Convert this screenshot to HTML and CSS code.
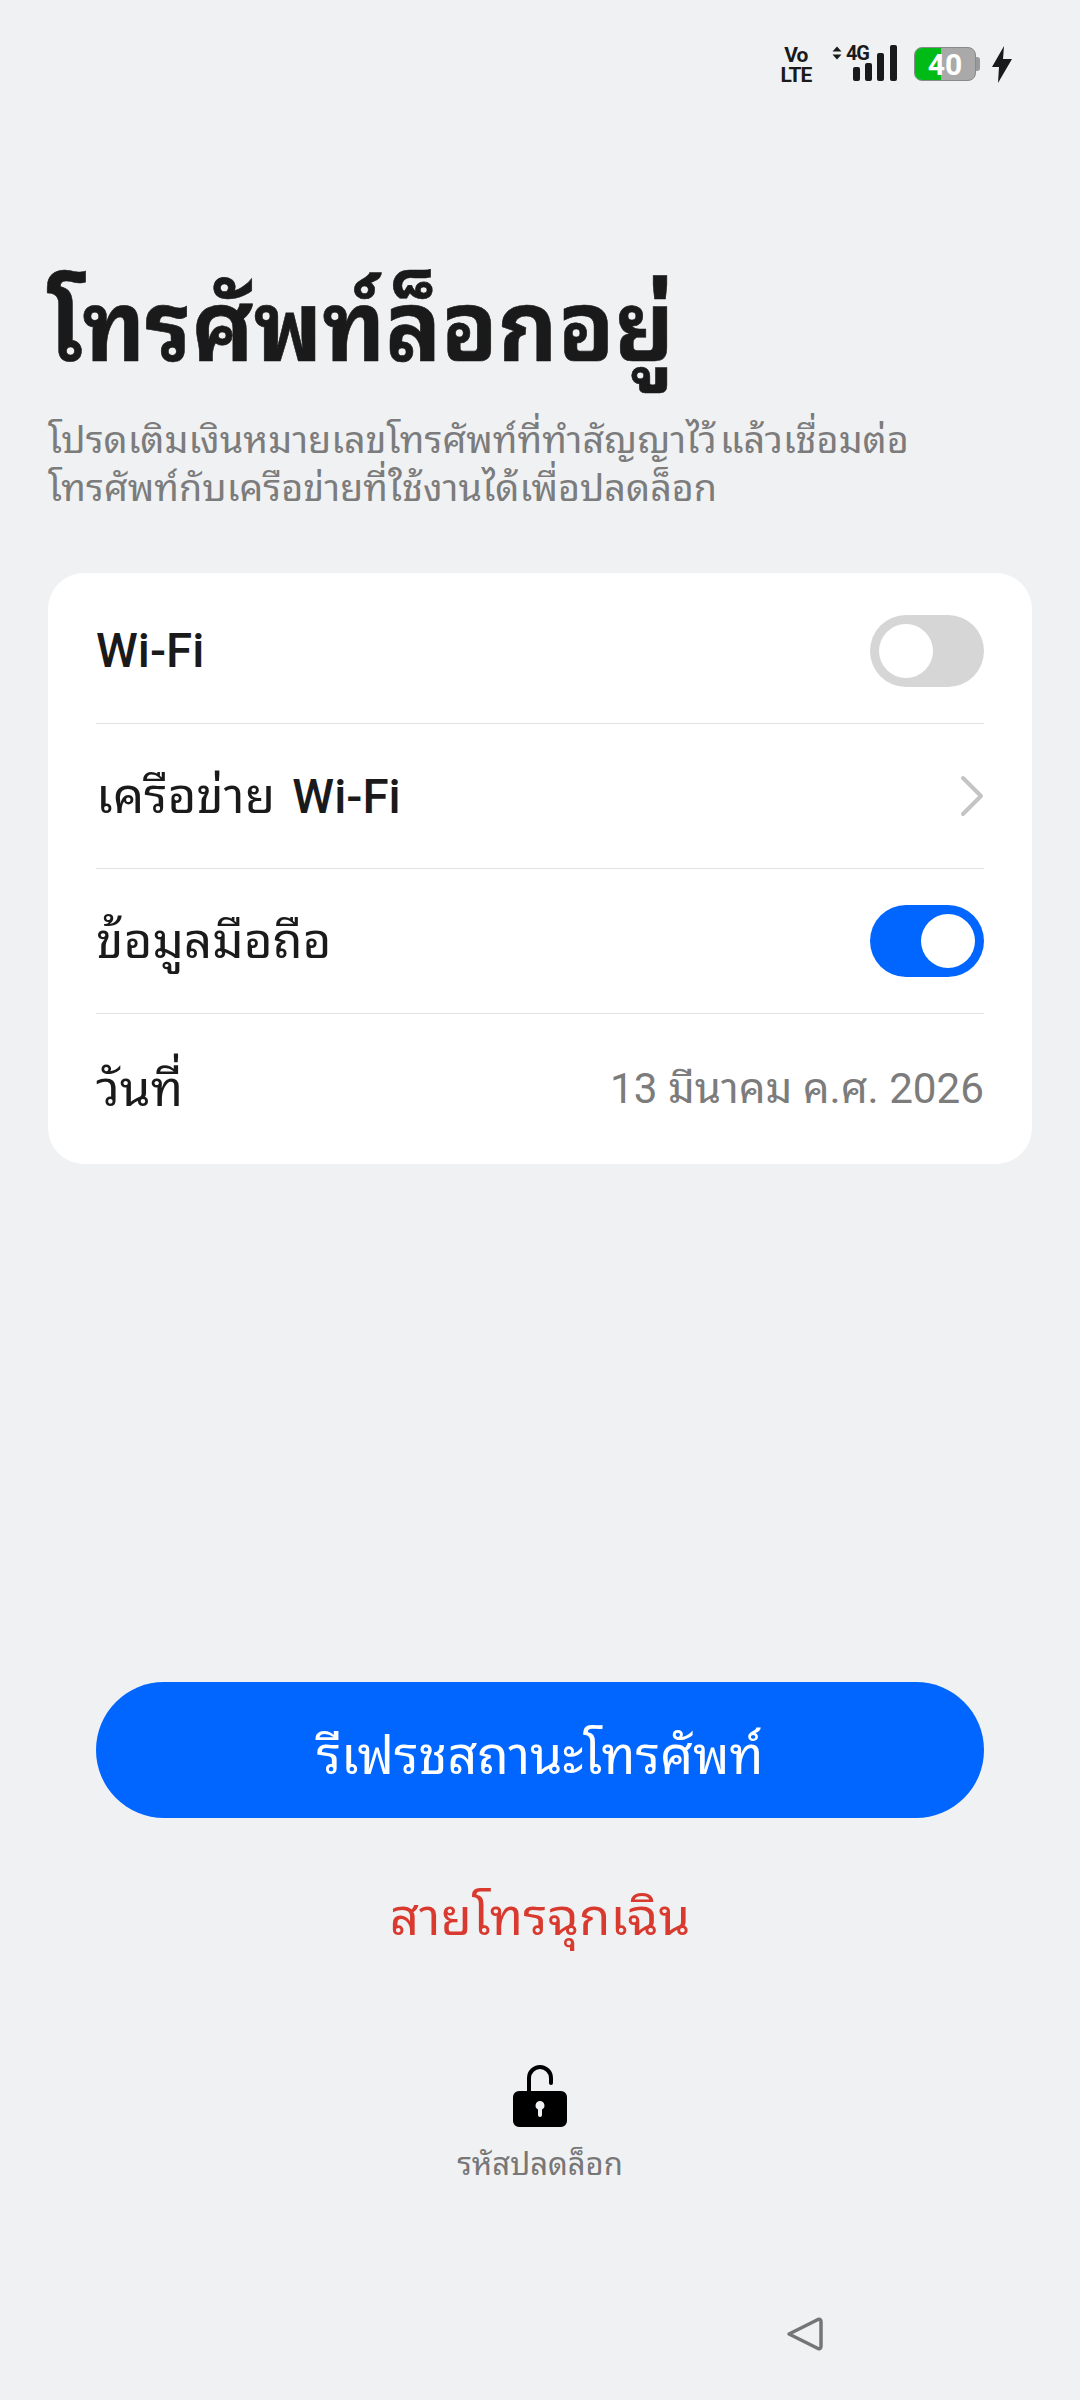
FILE: index.html
```html
<!DOCTYPE html>
<html lang="th">
<head>
<meta charset="utf-8">
<title>โทรศัพท์ล็อกอยู่</title>
<link rel="stylesheet" href="styles.css">
</head>
<body>
<div class="screen">
  <header class="status">
    <div class="volte"><span>Vo</span><span>LTE</span></div>
    <div class="net">
      <div class="net-type">
        <svg width="10" height="14" viewBox="0 0 10 14"><path d="M0.500 5.500L5 0.500L9.500 5.500ZM0.500 8.500L5 13.500L9.500 8.500Z" fill="#1a1a1a"/></svg>
        <span>4G</span>
      </div>
      <svg class="bars" width="44" height="36" viewBox="0 0 44 36">
        <rect x="0" y="22" width="7" height="14" rx="2" fill="#1a1a1a"/>
        <rect x="12" y="18" width="7" height="18" rx="2" fill="#1a1a1a"/>
        <rect x="24" y="8" width="7" height="28" rx="2" fill="#1a1a1a"/>
        <rect x="37" y="0" width="7" height="36" rx="2" fill="#1a1a1a"/>
      </svg>
    </div>
    <div class="battery"><div class="battery-body"><div class="battery-fill"></div><span class="battery-num">40</span></div><div class="battery-cap"></div></div>
    <svg class="bolt" width="20" height="37" viewBox="0 0 20 37"><path d="M12 0L0 21H7L6 37L20 13H11Z" fill="#1a1a1a"/></svg>
  </header>
  <main class="main">
    <h1 class="title">โทรศัพท์ล็อกอยู่</h1>
    <p class="desc">โปรดเติมเงินหมายเลขโทรศัพท์ที่ทำสัญญาไว้ แล้วเชื่อมต่อ<br>โทรศัพท์กับเครือข่ายที่ใช้งานได้เพื่อปลดล็อก</p>
    <section class="card">
      <div class="row row-first"><span class="latin">Wi-Fi</span><span class="toggle"><span class="knob"></span></span></div>
      <div class="row"><span class="label">เครือข่าย <span class="latin">Wi-Fi</span></span>
        <svg width="24" height="42" viewBox="0 0 24 42" class="chev"><path d="M3 3L21 21L3 39" fill="none" stroke="#c4c4c4" stroke-width="4" stroke-linecap="round" stroke-linejoin="round"/></svg>
      </div>
      <div class="row"><span class="label">ข้อมูลมือถือ</span><span class="toggle on"><span class="knob"></span></span></div>
      <div class="row"><span class="label">วันที่</span><span class="value">13 มีนาคม ค.ศ. 2026</span></div>
    </section>
  </main>
  <div class="actions">
    <button class="refresh">รีเฟรชสถานะโทรศัพท์</button>
    <div class="emergency">สายโทรฉุกเฉิน</div>
    <div class="unlock">
      <svg width="54" height="62" viewBox="0 0 54 62"><path d="M16 30V13A11 11 0 0 1 38 13V18" fill="none" stroke="#000" stroke-width="4" stroke-linecap="round"/><path fill-rule="evenodd" d="M6 26H48A6 6 0 0 1 54 32V56A6 6 0 0 1 48 62H6A6 6 0 0 1 0 56V32A6 6 0 0 1 6 26ZM27 36A4.500 4.500 0 0 0 25 44.500V50A2 2 0 0 0 29 50V44.500A4.500 4.500 0 0 0 27 36Z" fill="#000"/></svg>
      <span>รหัสปลดล็อก</span>
    </div>
  </div>
  <nav class="nav">
    <svg width="38" height="36" viewBox="0 0 38 36"><path d="M3 18L32 3.500Q35 2.500 35 6V30Q35 33.500 32 32.500L3 18Z" fill="none" stroke="#757575" stroke-width="3.500" stroke-linejoin="round"/></svg>
  </nav>
</div>
</body>
</html>
```
FILE: styles.css
```css
* { box-sizing: border-box; }
html, body { margin: 0; padding: 0; }
body { background: #f0f1f3; font-family: "Roboto", "Noto Sans Thai Looped", sans-serif; color: #1a1a1a; }
.screen { width: 1080px; height: 2400px; display: flex; flex-direction: column; overflow: hidden; }
.status { height: 128px; padding: 45px 68px 0 0; display: flex; justify-content: flex-end; align-items: flex-start; }
.volte { display: flex; flex-direction: column; align-items: center; width: 32px; font-size: 21px; line-height: 20px; font-weight: 700; letter-spacing: -1px; }
.net { margin-left: 20px; display: flex; align-items: flex-start; }
.net-type { display: flex; align-items: center; gap: 4px; height: 16px; font-size: 20px; font-weight: 700; letter-spacing: -1px; }
.bars { margin-left: -16px; }
.battery { display: flex; align-items: center; margin-left: 17px; margin-top: 2px; }
.battery-body { position: relative; width: 62px; height: 34px; background: #a9a9a9; border-radius: 8px; overflow: hidden; border: 1px solid #8a8a8a; }
.battery-fill { width: 26px; height: 100%; background: #00bb16; }
.battery-num { position: absolute; inset: 0; display: flex; align-items: center; justify-content: center; color: #fff; font-size: 30px; font-weight: 700; }
.battery-cap { width: 4px; height: 14px; background: #9a9a9a; border-radius: 0 3px 3px 0; }
.bolt { margin-left: 12px; margin-top: 1px; }
.main { padding: 0 48px; }
.title { margin: 128px 0 0; height: 144px; font-size: 98px; line-height: 144px; font-weight: 700; color: #1a1a1a; white-space: nowrap; transform: scaleX(0.94); transform-origin: left center; -webkit-text-stroke: 0.6px #1a1a1a; }
.desc { margin: 0; font-size: 37.750px; word-spacing: -6px; line-height: 48px; color: #7c7c7c; padding-top: 16px; height: 173px; }
.card { background: #fff; border-radius: 36px; padding: 0 48px; height: 591px; display: grid; grid-template-rows: 150px 145px 145px 151px; }
.row { display: flex; align-items: center; justify-content: space-between; border-top: 1px solid #e2e2e2; }
.row-first { border-top: 0; padding-top: 6px; }
.label { font-size: 49.500px; line-height: 60px; font-weight: 400; word-spacing: 5px; }
.latin { font-size: 47.500px; line-height: 60px; font-weight: 500; }
.value { font-size: 42.200px; line-height: 60px; color: #7c7c7c; }
.toggle { display: flex; align-items: center; width: 114px; height: 72px; border-radius: 36px; background: #d6d6d6; padding: 9px; }
.toggle.on { background: #0066ff; justify-content: flex-end; }
.knob { width: 54px; height: 54px; border-radius: 50%; background: #fff; }
.actions { display: flex; flex-direction: column; align-items: center; padding: 518px 96px 0; }
.refresh { width: 888px; height: 136px; border: 0; border-radius: 68px; background: #0066ff; color: #fff; font: inherit; font-size: 52px; }
.emergency { margin-top: 68px; font-size: 51px; color: #d93a2f; line-height: 64px; }
.unlock { margin-top: 115px; display: flex; flex-direction: column; align-items: center; gap: 9px; font-size: 31px; color: #777; }
.nav { position: absolute; left: 786px; top: 2316px; }
```
